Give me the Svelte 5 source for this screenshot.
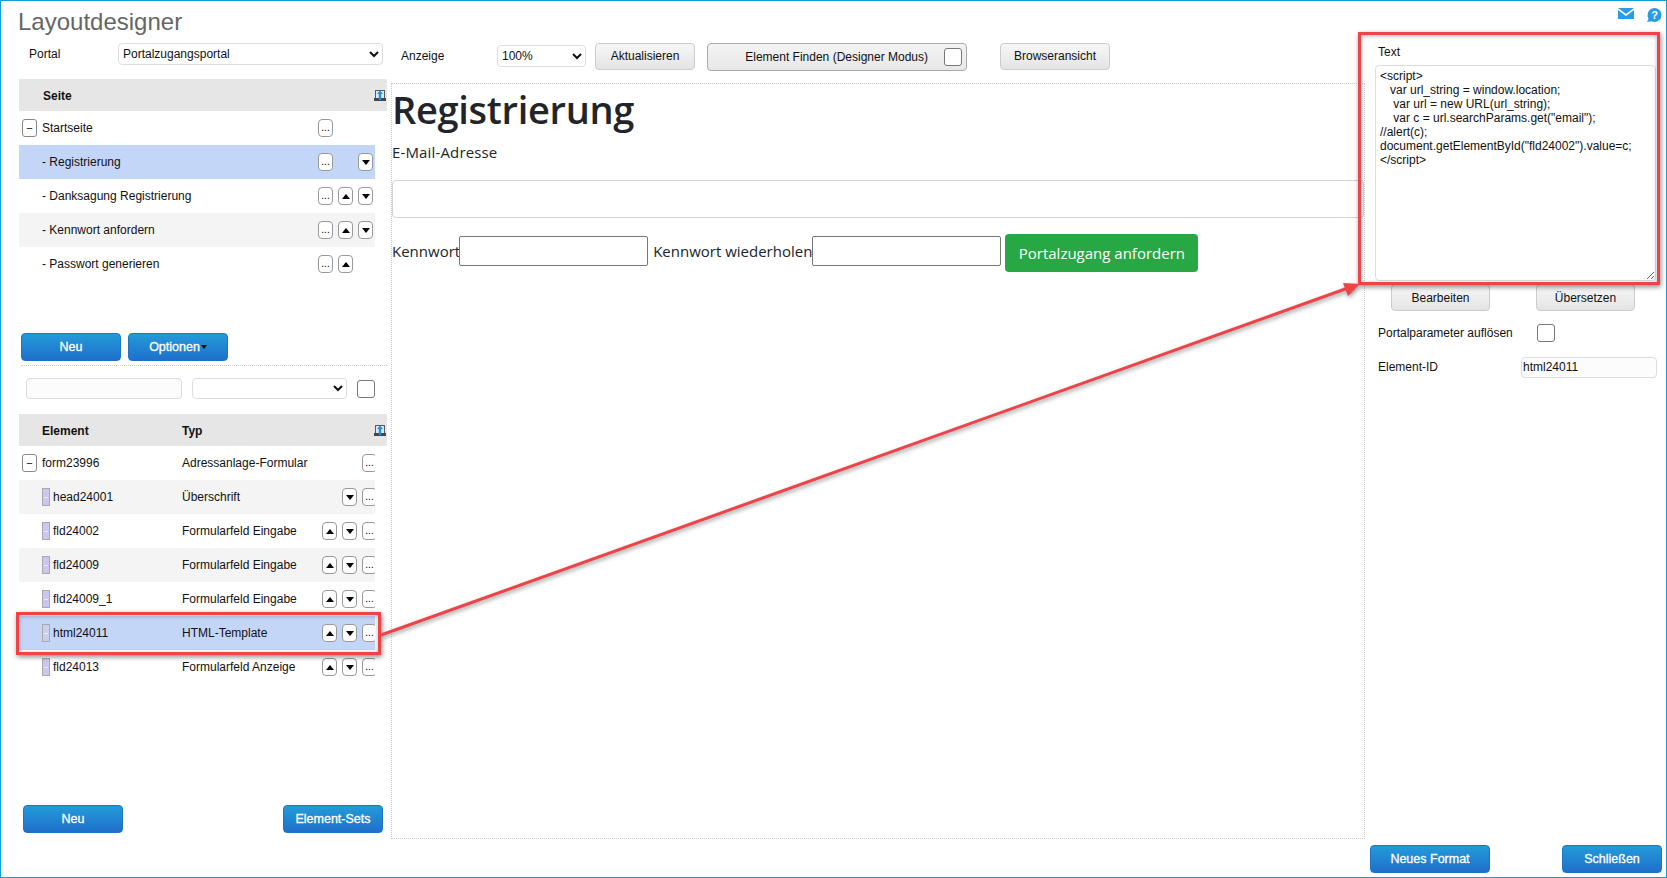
<script lang="ts">
  const pages = [
    { name: 'Startseite', root: true, dots: true },
    { name: '- Registrierung', down: true, selected: true },
    { name: '- Danksagung Registrierung', up: true, down: true },
    { name: '- Kennwort anfordern', up: true, down: true, alt: true },
    { name: '- Passwort generieren', up: true },
  ];

  const elements = [
    { name: 'form23996', type: 'Adressanlage-Formular', root: true },
    { name: 'head24001', type: 'Überschrift', down: true, alt: true },
    { name: 'fld24002', type: 'Formularfeld Eingabe', up: true, down: true },
    { name: 'fld24009', type: 'Formularfeld Eingabe', up: true, down: true, alt: true },
    { name: 'fld24009_1', type: 'Formularfeld Eingabe', up: true, down: true },
    { name: 'html24011', type: 'HTML-Template', up: true, down: true, selected: true },
    { name: 'fld24013', type: 'Formularfeld Anzeige', up: true, down: true },
  ];

  const code = `<script>
   var url_string = window.location;
    var url = new URL(url_string);
    var c = url.searchParams.get("email");
//alert(c);
document.getElementById("fld24002").value=c;
</` + `script>
`;
</script>

{#snippet sortIcon()}
  <svg class="sort-icon" width="12" height="12" viewBox="0 0 12 12">
    <rect x="1" y="0" width="10" height="9" fill="#555a60" />
    <rect x="2" y="1" width="8" height="7" fill="#dfe7ee" />
    <rect x="0" y="8" width="12" height="3" fill="#44484d" />
    <path d="M6 0.5 L9 4 H7.2 V10 H4.8 V4 H3 Z" fill="#1b8fe0" />
  </svg>
{/snippet}

<div class="app">
  <aside class="left">
    <h1>Layoutdesigner</h1>
    <div class="portal-row">
      <label for="portal">Portal</label>
      <select id="portal"><option>Portalzugangsportal</option></select>
    </div>

    <div class="table-head page-head"><b>Seite</b>{@render sortIcon()}</div>
    <div class="rows page-rows">
      {#each pages as page}
        <div class="row" class:alt={page.alt} class:selected={page.selected}>
          {#if page.root}<span class="expander">−</span>{/if}
          <span class="row-name">{page.name}</span>
          <div class="actions">
            <button class="mini dots">...</button>
            {#if page.up}<button class="mini" aria-label="up"><i class="tri up"></i></button>{:else}<span class="slot"></span>{/if}
            {#if page.down}<button class="mini" aria-label="down"><i class="tri down"></i></button>{:else}<span class="slot"></span>{/if}
          </div>
        </div>
      {/each}
    </div>

    <div class="button-row">
      <button class="blue">Neu</button>
      <button class="blue">Optionen<i class="caret"></i></button>
    </div>

    <div class="filter-row">
      <input type="text" />
      <select><option></option></select>
      <span class="check"></span>
    </div>

    <div class="table-head element-head"><b class="col-name">Element</b><b>Typ</b>{@render sortIcon()}</div>
    <div class="rows element-rows">
      {#each elements as el}
        <div class="row" class:alt={el.alt} class:selected={el.selected}>
          {#if el.root}
            <span class="expander">−</span>
          {:else}
            <span class="chip"></span>
          {/if}
          <span class="el-name" class:rooted={el.root}>{el.name}</span>
          <span class="el-type">{el.type}</span>
          <div class="actions el-actions">
            {#if el.up}<button class="mini" aria-label="up"><i class="tri up"></i></button>{/if}
            {#if el.down}<button class="mini" aria-label="down"><i class="tri down"></i></button>{/if}
            <button class="mini dots">...</button>
          </div>
        </div>
      {/each}
    </div>

    <div class="left-foot">
      <button class="blue">Neu</button>
      <button class="blue">Element-Sets</button>
    </div>
  </aside>

  <main class="center">
    <div class="toolbar">
      <span class="zoom-label">Anzeige</span>
      <select class="zoom-select"><option>100%</option></select>
      <button class="grey refresh">Aktualisieren</button>
      <div class="finder"><span>Element Finden (Designer Modus)</span><span class="check"></span></div>
      <button class="grey browser">Browseransicht</button>
    </div>

    <div class="preview">
      <h2>Registrierung</h2>
      <div class="field-label">E-Mail-Adresse</div>
      <input class="email" type="text" />
      <div class="pw-row">
        <span class="first">Kennwort</span><input type="password" />
        <span class="second">Kennwort wiederholen</span><input type="password" />
        <button class="submit">Portalzugang anfordern</button>
      </div>
    </div>
  </main>

  <aside class="right">
    <div class="top-icons">
      <svg width="16" height="11" viewBox="0 0 16 11"><path d="M0 0 H16 L8 6 Z M0 2 L8 8 L16 2 V11 H0 Z" fill="#2a9be6" /></svg>
      <svg width="16" height="15" viewBox="0 0 16 15">
        <circle cx="8.5" cy="7" r="7" fill="#2a9be6" />
        <path d="M3 10 L1 14 L7 13 Z" fill="#2a9be6" />
        <text x="8.5" y="11" text-anchor="middle" class="help-mark">?</text>
      </svg>
    </div>
    <div class="text-label">Text</div>
    <textarea value={code} spellcheck="false"></textarea>
    <div class="edit-buttons">
      <button class="grey">Bearbeiten</button>
      <button class="grey">Übersetzen</button>
    </div>
    <div class="prop-row param-row"><span>Portalparameter auflösen</span><span class="check"></span></div>
    <div class="prop-row id-row"><span>Element-ID</span><input type="text" value="html24011" /></div>
    <div class="right-foot">
      <button class="blue format">Neues Format</button>
      <button class="blue">Schließen</button>
    </div>
  </aside>

  <!-- annotations drawn on top of the screenshot -->
  <div class="callout row-callout"></div>
  <div class="callout text-callout"></div>
  <svg class="arrow" width="1667" height="878" viewBox="0 0 1667 878">
    <line x1="381" y1="635" x2="1348" y2="288" />
    <path d="M1360 284 L1343 283 L1348 296 Z" />
  </svg>
</div>

<style>
  :global(body){margin:0;background:#fff}
  .app{position:relative;box-sizing:border-box;width:1667px;height:878px;overflow:hidden;border:1px solid #0ea0dc;display:flex;font:12px "Liberation Sans",Arial,sans-serif;color:#111}
  select,input,textarea,button{font:inherit;color:inherit;box-sizing:border-box}
  select{border:1px solid #ddd;border-radius:4px;background:#fff;padding:0}
  input{border:1px solid #ddd;border-radius:4px;background:#fcfcfc;padding:0 1px}

  .left{width:386px;flex:none;padding-left:18px;box-sizing:border-box;display:flex;flex-direction:column}
  h1{margin:8px 0 0 -1px;height:26px;font-size:24px;line-height:26px;font-weight:400;color:#666}
  .portal-row{display:flex;align-items:center;height:22px;margin-top:8px}
  .portal-row label{width:99px;padding-left:10px;box-sizing:border-box}
  .portal-row select{width:265px;height:22px}

  .table-head{height:32px;width:368px;background:#e6e6e6;display:flex;align-items:center;padding:1px 0 0 24px;box-sizing:border-box;position:relative}
  .page-head{margin-top:14px}
  .sort-icon{position:absolute;right:1px;top:11px}
  .element-head{margin-top:15px;padding-left:23px}
  .col-name{width:140px}

  .rows{width:356px}
  .row{height:34px;display:flex;align-items:center;position:relative;overflow:hidden}
  .row.alt{background:#f4f4f4}
  .row.selected{background:#c4d6f8}
  .page-rows .row{padding-left:23px}
  .page-rows .row .expander{margin-left:-20px;margin-right:5px}
  .row-name{flex:1}
  .expander{width:15px;height:18px;box-sizing:border-box;border:1px solid #888;border-radius:3px;background:#fff;display:flex;align-items:center;justify-content:center;font-size:11px;line-height:1;flex:none}
  .actions{display:flex;gap:5px;flex:none;margin-right:2px}
  .slot{width:15px}
  .mini{width:15px;height:18px;border:1px solid #999;border-radius:4px;background:#fff;padding:0;display:flex;align-items:center;justify-content:center;flex:none}
  .dots{font-size:10px;line-height:1;align-items:flex-end;padding-bottom:3px;color:#000}
  .tri{width:0;height:0;border-left:4.5px solid transparent;border-right:4.5px solid transparent}
  .tri.up{border-bottom:5px solid #000}
  .tri.down{border-top:5px solid #000}

  .button-row{display:flex;gap:7px;margin:52px 0 0 2px;padding-bottom:4px;border-bottom:1px dotted #ccc;width:366px}
  .blue{width:100px;height:28px;border:1px solid #1b75c4;border-radius:4px;background:linear-gradient(#239bd9,#1f6fcb);color:#fff;font-size:12.5px;font-weight:400;-webkit-text-stroke:.3px #fff;padding:0;white-space:nowrap}
  .caret{display:inline-block;width:0;height:0;border-left:3.5px solid transparent;border-right:3.5px solid transparent;border-top:4px solid #111;margin-left:1px;vertical-align:2px}
  .filter-row{display:flex;align-items:center;margin:12px 0 0 7px}
  .filter-row input{width:156px;height:21px}
  .filter-row select{width:155px;height:21px;margin-left:10px}
  .filter-row .check{margin-left:10px}
  .check{display:block;width:18px;height:18px;box-sizing:border-box;border:1px solid #777;border-radius:3px;background:#fff;flex:none}

  .element-rows .row{padding-left:3px}
  .chip{width:8px;height:18px;margin-left:20px;box-sizing:border-box;background:#cbc6f4;border:1px solid #aaa;flex:none;position:relative}
  .chip::after{content:'';position:absolute;left:1px;right:1px;top:8px;height:1px;background:#eee}
  .selected .chip{background:#c9cff0}
  .el-name{padding-left:3px;flex:none}
  .el-name.rooted{width:140px;padding-left:5px}
  .el-name:not(.rooted){width:129px}
  .el-type{flex:1;white-space:nowrap}
  .el-actions{position:absolute;right:-2px;top:8px;margin:0}

  .left-foot{display:flex;justify-content:space-between;width:360px;margin:auto 0 44px 4px}

  .center{flex:none;width:974px;box-sizing:border-box;margin-left:4px;display:flex;flex-direction:column}
  .toolbar{display:flex;align-items:center;height:82px;box-sizing:border-box;padding:38px 0 10px 10px}
  .zoom-label{width:96px}
  .zoom-select{width:89px;height:22px}
  .grey{height:27px;border:1px solid #ccc;border-radius:4px;background:linear-gradient(#f7f7f7,#e4e4e4);padding:0;white-space:nowrap}
  .refresh{width:100px;margin-left:9px}
  .finder{width:260px;height:28px;margin:2px 0 0 12px;box-sizing:border-box;border:1px solid #aaa;border-radius:4px;background:linear-gradient(#f3f3f3,#e8e8e8);display:flex;align-items:center;justify-content:flex-end;gap:16px;padding-right:4px}
  .browser{width:110px;margin-left:33px}

  .preview{height:756px;border:1px dotted #ccc;box-sizing:border-box;padding:0;font-family:"Open Sans","Noto Sans",sans-serif;color:#212529}
  h2{margin:0;height:52px;font-size:38px;line-height:50px;font-weight:600;letter-spacing:-.3px}
  .field-label{font-size:15px;letter-spacing:.15px;line-height:24px;height:24px;margin-top:4px}
  .email{display:block;width:972px;height:38px;margin-top:16px;border:1px solid #ced4da;background:#fff}
  .pw-row{display:flex;align-items:center;margin-top:14px;font-size:15px;height:38px}
  .pw-row input{width:189px;height:30px;border:1px solid #767676;border-radius:2px;background:#fff}
  .first{margin-right:-1px}
  .second{margin-left:5px}
  .submit{width:193px;height:38px;margin:4px 0 0 4px;border:0;border-radius:4px;background:#28a745;color:#fff;font-size:15px;padding:0}

  .right{flex:1;min-width:0;box-sizing:border-box;padding:0 9px 0 10px;display:flex;flex-direction:column;position:relative}
  .top-icons{position:absolute;top:7px;right:4px;display:flex;gap:12px;align-items:flex-start}
  .help-mark{font:700 11px "Liberation Sans",sans-serif;fill:#fff}
  .text-label{margin:44px 0 0 3px;height:20px;line-height:14px}
  textarea{display:block;width:281px;height:216px;border:1px solid #ddd;border-radius:4px;padding:3px 4px;line-height:14px;background:#fff;resize:both;outline:0;overflow:hidden}
  .edit-buttons{display:flex;gap:46px;margin:3px 0 0 16px}
  .edit-buttons .grey{width:99px}
  .prop-row{display:flex;align-items:center;margin-left:3px}
  .param-row{margin-top:12px;height:20px}
  .param-row span:first-child{width:159px}
  .id-row{margin-top:13px;height:22px}
  .id-row span{width:143px}
  .id-row input{width:136px;height:21px}
  .right-foot{margin-top:auto;margin-bottom:4px;display:flex;justify-content:space-between;margin-left:-5px;margin-right:-5px;position:relative}
  .right-foot .format{width:120px}

  .callout{position:absolute;box-sizing:border-box;border:3px solid #f04347;box-shadow:1px 2px 5px rgba(0,0,0,.45),inset 0 1px 4px rgba(0,0,0,.3);pointer-events:none}
  .row-callout{left:15px;top:611px;width:365px;height:43px}
  .text-callout{left:1357px;top:31px;width:302px;height:253px}
  .arrow{position:absolute;left:-1px;top:-1px;pointer-events:none;filter:drop-shadow(1px 2px 2px rgba(0,0,0,.4))}
  .arrow line{stroke:#f04347;stroke-width:3}
  .arrow path{fill:#f04347}
</style>
